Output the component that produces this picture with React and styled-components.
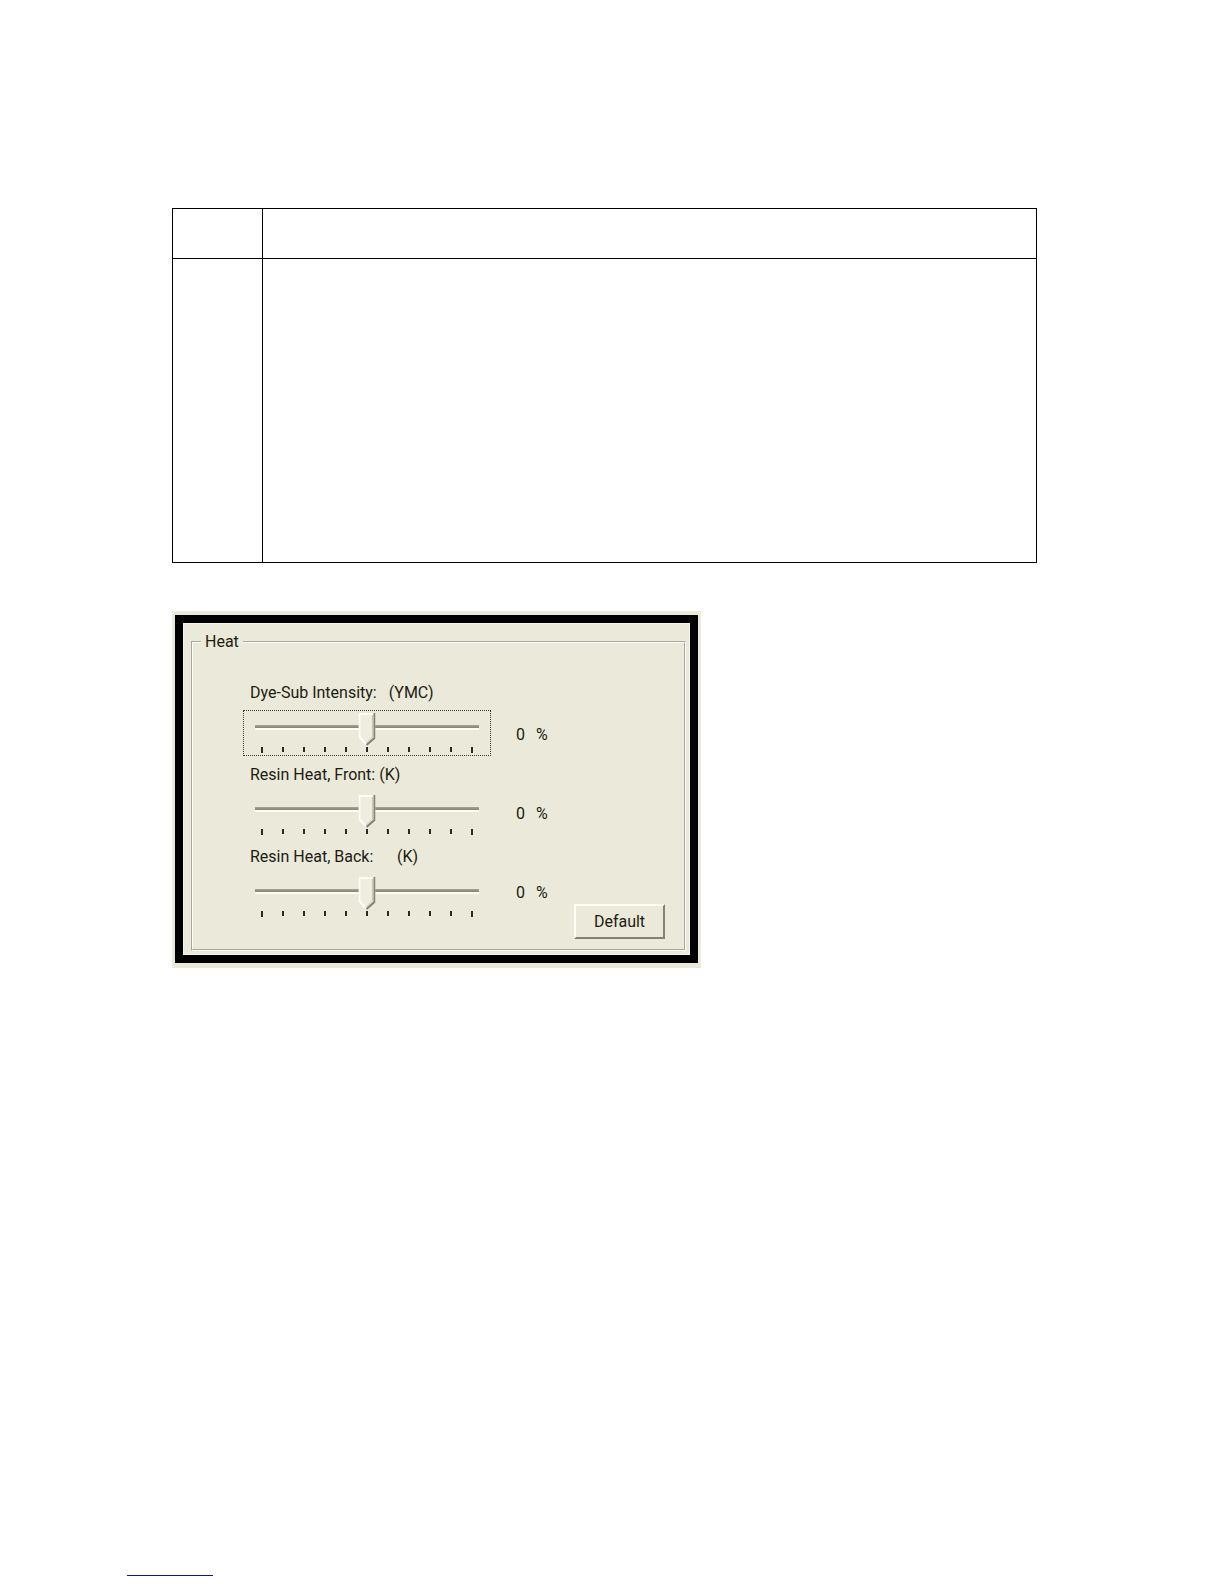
import React, { useState } from "react";
import styled, { createGlobalStyle } from "styled-components";

const GlobalStyle = createGlobalStyle`
  *, *::before, *::after {
    box-sizing: border-box;
  }
  body {
    margin: 0;
    background: #fff;
    color: #1c1b14;
    font-family: Roboto, "Liberation Sans", sans-serif;
    font-size: 16px;
    line-height: 24px;
  }
`;

const Page = styled.div`
  display: flex;
  flex-direction: column;
  min-height: 100vh;
  padding: 208px 187px 8px 172px;
`;

const Table = styled.table`
  width: 100%;
  border-collapse: collapse;
  table-layout: fixed;
`;

const Cell = styled.td`
  width: ${(props) => (props.$narrow ? "90px" : "auto")};
  height: ${(props) => (props.$tall ? "304px" : "50px")};
  padding: 0;
  border: 1px solid #000;
`;

const Panel = styled.section`
  width: 100%;
  max-width: 529px;
  margin-top: 48px;
  padding: 4px 3px 5px;
  background: #ebe9d9;
`;

const Frame = styled.form`
  padding: 7px 4px 4px 8px;
  border: 8px solid #000;
  box-shadow: inset 0 0 0 1px #f5f4ea;
`;

const Group = styled.fieldset`
  min-width: 0;
  margin: 0;
  padding: 0 19px 10px 8px;
  border: 2px groove #fcfbf4;
`;

const Legend = styled.legend`
  padding: 0 4px;
`;

const Body = styled.div`
  display: flex;
  gap: 25px;
  padding: 27px 0 0 42px;
`;

const Sliders = styled.div`
  display: flex;
  flex-direction: column;
  gap: 7px;
  width: 248px;
  padding-bottom: 19px;
`;

const Field = styled.div`
  display: flex;
  flex-direction: column;
  gap: 5px;
`;

const Label = styled.label`
  padding-left: 7px;
  white-space: pre;
`;

const SliderBox = styled.div`
  height: 46px;
  padding: 1px 11px 0;
  border: 1px dotted ${(props) => (props.$focused ? "#3a382c" : "transparent")};
`;

const Rail = styled.div`
  position: relative;
  height: 34px;
`;

const Range = styled.input`
  display: block;
  width: 100%;
  height: 34px;
  margin: 0;
  appearance: none;
  background: transparent;
  outline: none;

  &::-webkit-slider-runnable-track {
    height: 34px;
    background:
      linear-gradient(#a8a593, #858270) 0 13px / 100% 3px no-repeat,
      linear-gradient(#fdfcf5, #fdfcf5) 0 16px / 100% 2px no-repeat;
  }

  &::-webkit-slider-thumb {
    width: 17px;
    height: 34px;
    appearance: none;
    background: transparent;
  }
`;

const Thumb = styled.svg`
  position: absolute;
  top: 0;
  width: 17px;
  height: 34px;
  transform: translateX(-50%);
  pointer-events: none;
`;

const Ticks = styled.div`
  display: flex;
  justify-content: space-between;
  padding: 1px 6px 0;
`;

const Tick = styled.span`
  width: 2px;
  height: ${(props) => (props.$end ? "6px" : "5px")};
  background: #2b2a20;
`;

const Values = styled.div`
  display: flex;
  flex-direction: column;
  gap: 55px;
  padding-top: 42px;
`;

const Value = styled.output`
  display: flex;
  gap: 11px;
`;

const Button = styled.button`
  align-self: flex-end;
  width: 91px;
  height: 35px;
  margin-left: auto;
  padding: 0;
  border: 2px solid;
  border-color: #fdfcf5 #85826f #85826f #fdfcf5;
  background: #ebe9d9;
  color: inherit;
  font: inherit;
`;

const FooterRule = styled.hr`
  width: 86px;
  margin: auto 0 0 -45px;
  border: 0;
  border-top: 1px solid #14148c;
`;

const settings = [
  { id: "dye", label: "Dye-Sub Intensity:   (YMC)" },
  { id: "front", label: "Resin Heat, Front: (K)" },
  { id: "back", label: "Resin Heat, Back:      (K)" },
];

const defaults = { dye: 0, front: 0, back: 0 };

function HeatSlider({ id, label, value, focused, onFocus, onChange }) {
  const position = (value + 100) / 2;

  return (
    <Field>
      <Label htmlFor={id}>{label}</Label>
      <SliderBox $focused={focused}>
        <Rail>
          <Range
            type="range"
            id={id}
            min="-100"
            max="100"
            value={value}
            onFocus={onFocus}
            onChange={(e) => onChange(Number(e.target.value))}
          />
          <Thumb viewBox="0 0 17 34" style={{ left: `${position}%` }}>
            <path d="M0 1H17V26L9 34H8L0 26Z" fill="#efede0" />
            <path d="M1 2V25L8 33M0 2H15" fill="none" stroke="#fdfcf5" strokeWidth="2" />
            <path d="M16 1V26L8 33" fill="none" stroke="#858270" strokeWidth="2" />
            <path d="M14 3V25L8 31" fill="none" stroke="#c9c6b5" />
          </Thumb>
        </Rail>
        <Ticks>
          {Array.from({ length: 11 }, (_, i) => (
            <Tick key={i} $end={i === 0 || i === 10} />
          ))}
        </Ticks>
      </SliderBox>
    </Field>
  );
}

function App() {
  const [values, setValues] = useState(defaults);
  const [focused, setFocused] = useState("dye");

  return (
    <>
      <GlobalStyle />
      <Page>
        <Table>
          <tbody>
            <tr>
              <Cell $narrow />
              <Cell />
            </tr>
            <tr>
              <Cell $narrow $tall />
              <Cell $tall />
            </tr>
          </tbody>
        </Table>
        <Panel>
          <Frame>
            <Group>
              <Legend>Heat</Legend>
              <Body>
                <Sliders>
                  {settings.map(({ id, label }) => (
                    <HeatSlider
                      key={id}
                      id={id}
                      label={label}
                      value={values[id]}
                      focused={focused === id}
                      onFocus={() => setFocused(id)}
                      onChange={(value) => setValues({ ...values, [id]: value })}
                    />
                  ))}
                </Sliders>
                <Values>
                  {settings.map(({ id }) => (
                    <Value key={id} htmlFor={id}>
                      <span>{values[id]}</span>
                      <span>%</span>
                    </Value>
                  ))}
                </Values>
                <Button type="button" onClick={() => setValues(defaults)}>
                  Default
                </Button>
              </Body>
            </Group>
          </Frame>
        </Panel>
        <FooterRule />
      </Page>
    </>
  );
}

export default App;
